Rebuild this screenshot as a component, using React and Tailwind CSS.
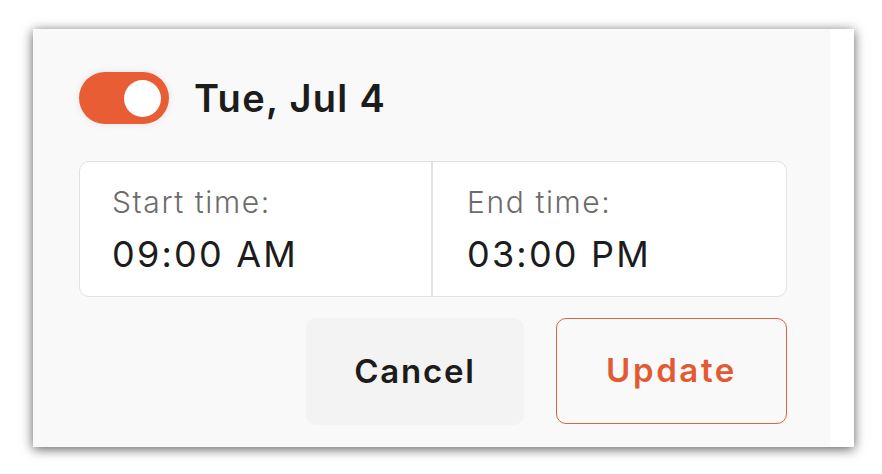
import React, { useState } from "react";

const TimeCell = ({ label, value, className }) => (
  <div className={`flex-1 flex flex-col pt-[22px] ${className}`}>
    <span className="text-[30px] font-light text-[#6b6b6b] leading-[36px] tracking-[1.6px]">{label}</span>
    <span className="mt-[13px] text-[36px] text-[#1c1c1c] leading-[42px] tracking-[2.2px]">{value}</span>
  </div>
);

const App = () => {
  const [enabled, setEnabled] = useState(true);

  return (
    <div className="w-[882px] h-[474px] bg-white pl-[33px] pt-[29px]" style={{ fontFamily: "Inter, 'Noto Sans', sans-serif" }}>
      <div className="w-[821px] h-[418px] flex shadow-[0_2px_11px_rgba(0,0,0,0.65)]">
        <div className="flex-1 bg-[#f9f9f9] pl-[46px] pr-[43px] pt-[43px]">
          {/* header */}
          <div className="flex items-center gap-[25px] h-[52px]">
            <button
              onClick={() => setEnabled(!enabled)}
              className="relative w-[90px] h-[52px] rounded-full bg-[#e85d33] shadow-[0_0_8px_rgba(0,0,0,0.08)]"
            >
              <span className="absolute right-[8px] top-[7.5px] w-[37px] h-[37px] rounded-full bg-white" />
            </button>
            <h1 className="text-[38px] font-semibold text-[#1c1c1c] tracking-[1.3px]">Tue, Jul 4</h1>
          </div>

          {/* times */}
          <div className="mt-[37px] h-[136px] flex bg-white border border-[#e2e2e2] rounded-[10px]">
            <TimeCell label="Start time:" value="09:00 AM" className="pl-[32px] border-r-2 border-[#e2e2e2]" />
            <TimeCell label="End time:" value="03:00 PM" className="pl-[34px]" />
          </div>

          {/* actions */}
          <div className="mt-[21px] flex justify-end gap-[32px]">
            <button className="w-[218px] h-[107px] rounded-[10px] bg-[#f3f3f3] text-[33px] font-semibold text-[#1c1c1c] tracking-[1.8px]">
              Cancel
            </button>
            <button className="w-[231px] h-[106px] rounded-[10px] border-[1.5px] border-[#e0643f] text-[33px] font-semibold text-[#e25a34] tracking-[2.6px]">
              Update
            </button>
          </div>
        </div>
        <div className="w-[24px] bg-white" />
      </div>
    </div>
  );
};

export default App;
